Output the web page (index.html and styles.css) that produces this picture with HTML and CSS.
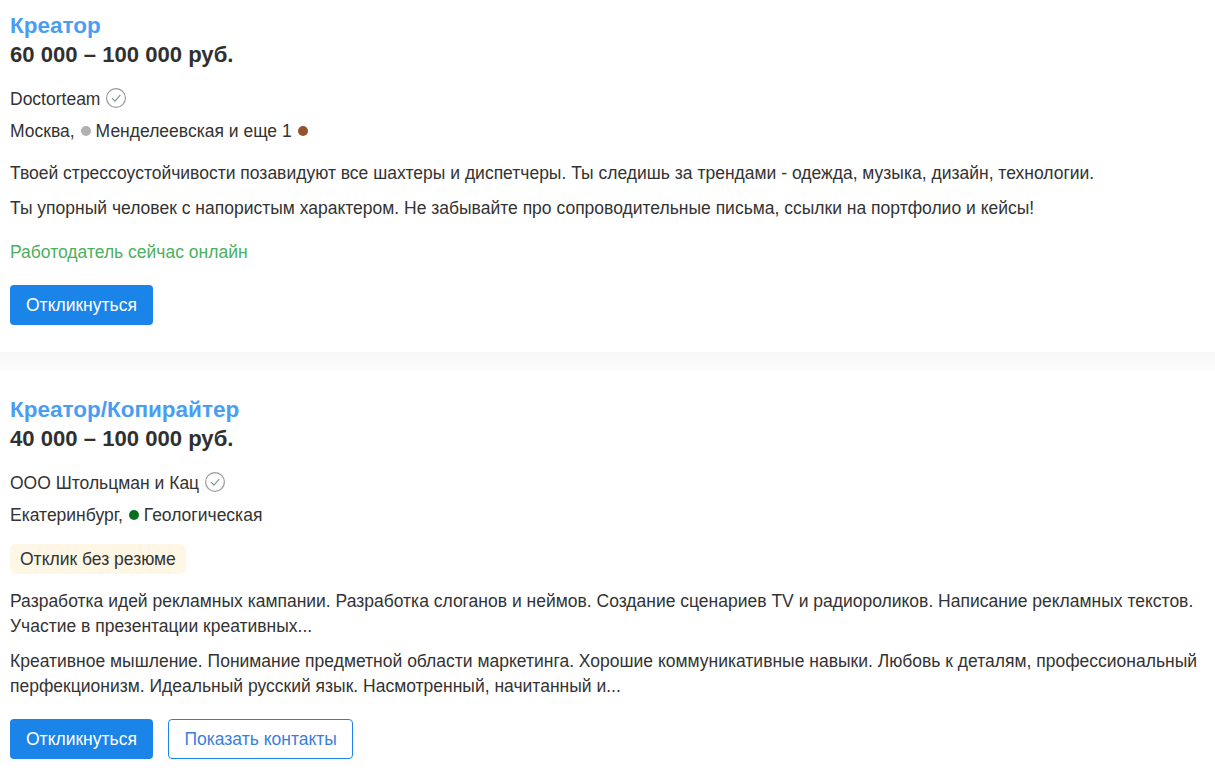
FILE: index.html
```html
<!DOCTYPE html>
<html lang="ru">
<head>
  <meta charset="UTF-8">
  <meta name="viewport" content="width=device-width, initial-scale=1.0">
  <title>Вакансии</title>
  <link rel="stylesheet" href="styles.css">
</head>
<body>
  <!-- first vacancy -->
  <div class="vacancy">
    <a href="#" class="vacancy-title">Креатор</a>
    <div class="salary">60 000 – 100 000 руб.</div>
    <div class="company">
      Doctorteam
      <svg class="check" viewBox="0 0 20 20"><circle cx="10" cy="10" r="9.4"/><path class="tick" d="M6 10.2l3 3 5.2-6"/></svg>
    </div>
    <div class="location">
      Москва,
      <span class="metro metro-grey"></span>
      Менделеевская и еще 1
      <span class="metro metro-brown"></span>
    </div>
    <p class="snippet first">Твоей стрессоустойчивости позавидуют все шахтеры и диспетчеры. Ты следишь за трендами - одежда, музыка, дизайн, технологии.</p>
    <p class="snippet">Ты упорный человек с напористым характером. Не забывайте про сопроводительные письма, ссылки на портфолио и кейсы!</p>
    <div class="online">Работодатель сейчас онлайн</div>
    <div class="actions">
      <button class="btn-primary">Откликнуться</button>
    </div>
  </div>

  <div class="divider"></div>

  <!-- second vacancy -->
  <div class="vacancy vacancy-second">
    <a href="#" class="vacancy-title">Креатор/Копирайтер</a>
    <div class="salary">40 000 – 100 000 руб.</div>
    <div class="company">
      ООО Штольцман и Кац
      <svg class="check" viewBox="0 0 20 20"><circle cx="10" cy="10" r="9.4"/><path class="tick" d="M6 10.2l3 3 5.2-6"/></svg>
    </div>
    <div class="location">
      Екатеринбург,
      <span class="metro metro-green"></span>
      Геологическая
    </div>
    <div class="label">Отклик без резюме</div>
    <p class="snippet">Разработка идей рекламных кампании. Разработка слоганов и неймов. Создание сценариев TV и радиороликов. Написание рекламных текстов. Участие в презентации креативных...</p>
    <p class="snippet">Креативное мышление. Понимание предметной области маркетинга. Хорошие коммуникативные навыки. Любовь к деталям, профессиональный перфекционизм. Идеальный русский язык. Насмотренный, начитанный и...</p>
    <div class="actions actions-second">
      <button class="btn-primary">Откликнуться</button>
      <button class="btn-outline">Показать контакты</button>
    </div>
  </div>
</body>
</html>
```

FILE: styles.css
```css
* {
  box-sizing: border-box;
  font-family: "Liberation Sans", Arial, sans-serif;
}

body {
  margin: 0;
  background-color: #fff;
  color: #333;
  font-size: 17.5px;
  line-height: 26px;
}

.vacancy {
  padding: 12px 10px 27px;
}

.vacancy-second {
  padding-top: 25px;
  padding-bottom: 0;
}

.vacancy-title {
  display: block;
  color: #4b9df3;
  font-size: 22.5px;
  font-weight: bold;
  line-height: 28px;
  text-decoration: none;
}

.salary {
  font-size: 22.1px;
  font-weight: bold;
  line-height: 30px;
  color: #303030;
}

.company {
  display: flex;
  align-items: center;
  gap: 6px;
  margin-top: 16px;
  height: 26px;
}

.check {
  width: 20px;
  height: 20px;
  fill: none;
  stroke: #999;
  stroke-width: 1.2;
  margin-top: -2px;
}

.tick {
  stroke: #7a9a85;
}

.location {
  display: flex;
  align-items: center;
  margin-top: 6px;
  height: 26px;
}

.metro {
  width: 10px;
  height: 10px;
  border-radius: 50%;
  margin: 0 5px 0 6px;
}

.metro-grey {
  background-color: #b1b1b1;
}

.metro-brown {
  background-color: #95522d;
}

.metro-green {
  background-color: #0a6f20;
}

.snippet {
  margin: 0 0 10px;
  line-height: 25px;
}

.snippet.first {
  margin-top: 17px;
}

.label {
  display: inline-block;
  margin: 16px 0 15px;
  padding: 0 10px;
  height: 30px;
  line-height: 30px;
  background-color: #fff7e6;
  border-radius: 6px;
}

.online {
  margin-top: 18px;
  color: #4bb060;
}

.actions {
  display: flex;
  gap: 15px;
  margin-top: 20px;
}

button {
  height: 40px;
  padding: 0 16px;
  font-size: 17.5px;
  border-radius: 4px;
  cursor: pointer;
}

.btn-primary {
  background: #1a84e8;
  color: #fff;
  border: none;
}

.btn-outline {
  padding: 0 15.5px;
  background: #fff;
  color: #3a7fdc;
  border: 1px solid #1a84e8;
}

.divider {
  height: 19px;
  background: linear-gradient(#f7f7f7, #fcfcfc);
}
```
